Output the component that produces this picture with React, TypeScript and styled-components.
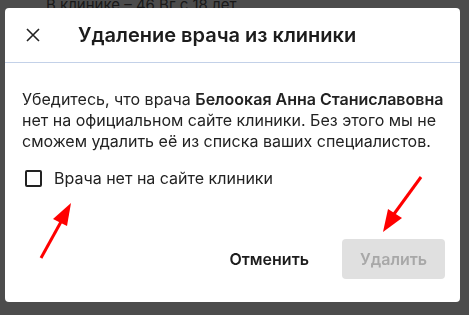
import styled, { createGlobalStyle } from 'styled-components';

const GlobalStyle = createGlobalStyle`
  html, body {
    margin: 0;
    padding: 0;
    height: 100%;
    overflow: hidden;
    font-family: Inter, "Noto Sans", sans-serif;
  }
`;

export default function App() {
  return (
    <>
      <GlobalStyle />
      <Page>
        <PageLine>В клинике – 46 Вг с 18 лет</PageLine>
      </Page>
      <Backdrop>
        <Modal>
          <Header>
            <CloseButton aria-label="Закрыть">
              <svg width="14" height="14" viewBox="0 0 14 14" fill="none">
                <path d="M1 1L13 13M13 1L1 13" stroke="#222" strokeWidth="1.6" />
              </svg>
            </CloseButton>
            <Title>Удаление врача из клиники</Title>
          </Header>
          <Body>
            <Text>
              Убедитесь, что врача <b>Белоокая Анна Станиславовна</b> нет на официальном сайте
              клиники. Без этого мы не сможем удалить её из списка ваших специалистов.
            </Text>
            <CheckRow>
              <CheckBox />
              <CheckLabel>Врача нет на сайте клиники</CheckLabel>
            </CheckRow>
          </Body>
          <Footer>
            <GhostButton>Отменить</GhostButton>
            <PrimaryButton disabled>Удалить</PrimaryButton>
          </Footer>
        </Modal>
        <Arrows width="469" height="315" viewBox="0 0 469 315">
          <line x1="41" y1="258" x2="62" y2="220" stroke="#ff0000" strokeWidth="3" />
          <polygon points="71,203 53,219 67,226" fill="#ff0000" />
          <line x1="421" y1="177" x2="394" y2="214" stroke="#ff0000" strokeWidth="3" />
          <polygon points="383,232 388,209 402,218" fill="#ff0000" />
        </Arrows>
      </Backdrop>
    </>
  );
}

const Page = styled.div`
  height: 100vh;
  background: #fff;
  padding-left: 46px;
`;

const PageLine = styled.div`
  margin-top: -5px;
  font-size: 15px;
  color: #555;
`;

const Backdrop = styled.div`
  position: fixed;
  inset: 0;
  background: rgba(0, 0, 0, 0.7);
  padding: 8px 0 0 5px;
`;

const Modal = styled.div`
  width: 455px;
  height: 294px;
  background: #fff;
  border-radius: 4px;
  display: flex;
  flex-direction: column;
  box-sizing: border-box;
`;

const Header = styled.div`
  height: 55px;
  display: flex;
  align-items: center;
  gap: 38px;
  padding: 0 0 0 21px;
  border-bottom: 1px solid #c3d1e8;
  box-sizing: border-box;
`;

const CloseButton = styled.button`
  border: 0;
  background: none;
  padding: 0;
  display: flex;
  width: 14px;
  height: 14px;
`;

const Title = styled.h2`
  margin: 0;
  font-size: 20px;
  font-weight: 600;
  color: #1c1c1c;
`;

const Body = styled.div`
  flex: 1;
  padding: 26px 14px 0 17px;
`;

const Text = styled.p`
  margin: 0;
  font-size: 16px;
  line-height: 21px;
  color: #222;

  b {
    font-weight: 600;
  }
`;

const CheckRow = styled.label`
  display: flex;
  align-items: center;
  gap: 12px;
  margin-top: 16px;
  padding-left: 3px;
`;

const CheckBox = styled.span`
  width: 17px;
  height: 17px;
  box-sizing: border-box;
  border: 2px solid #222;
  border-radius: 2px;
`;

const CheckLabel = styled.span`
  font-size: 16px;
  color: #222;
`;

const Footer = styled.div`
  display: flex;
  justify-content: flex-end;
  align-items: center;
  gap: 17px;
  padding: 0 15px 23px 0;
`;

const GhostButton = styled.button`
  height: 40px;
  padding: 0 16px;
  border: 0;
  background: none;
  font-family: inherit;
  font-size: 16px;
  font-weight: 600;
  color: #1c1c1c;
`;

const PrimaryButton = styled.button`
  height: 40px;
  width: 103px;
  border: 0;
  border-radius: 4px;
  background: #e0e0e0;
  font-family: inherit;
  font-size: 16px;
  font-weight: 600;
  color: #a8a8a8;
`;

const Arrows = styled.svg`
  position: absolute;
  left: 0;
  top: 0;
  pointer-events: none;
`;
